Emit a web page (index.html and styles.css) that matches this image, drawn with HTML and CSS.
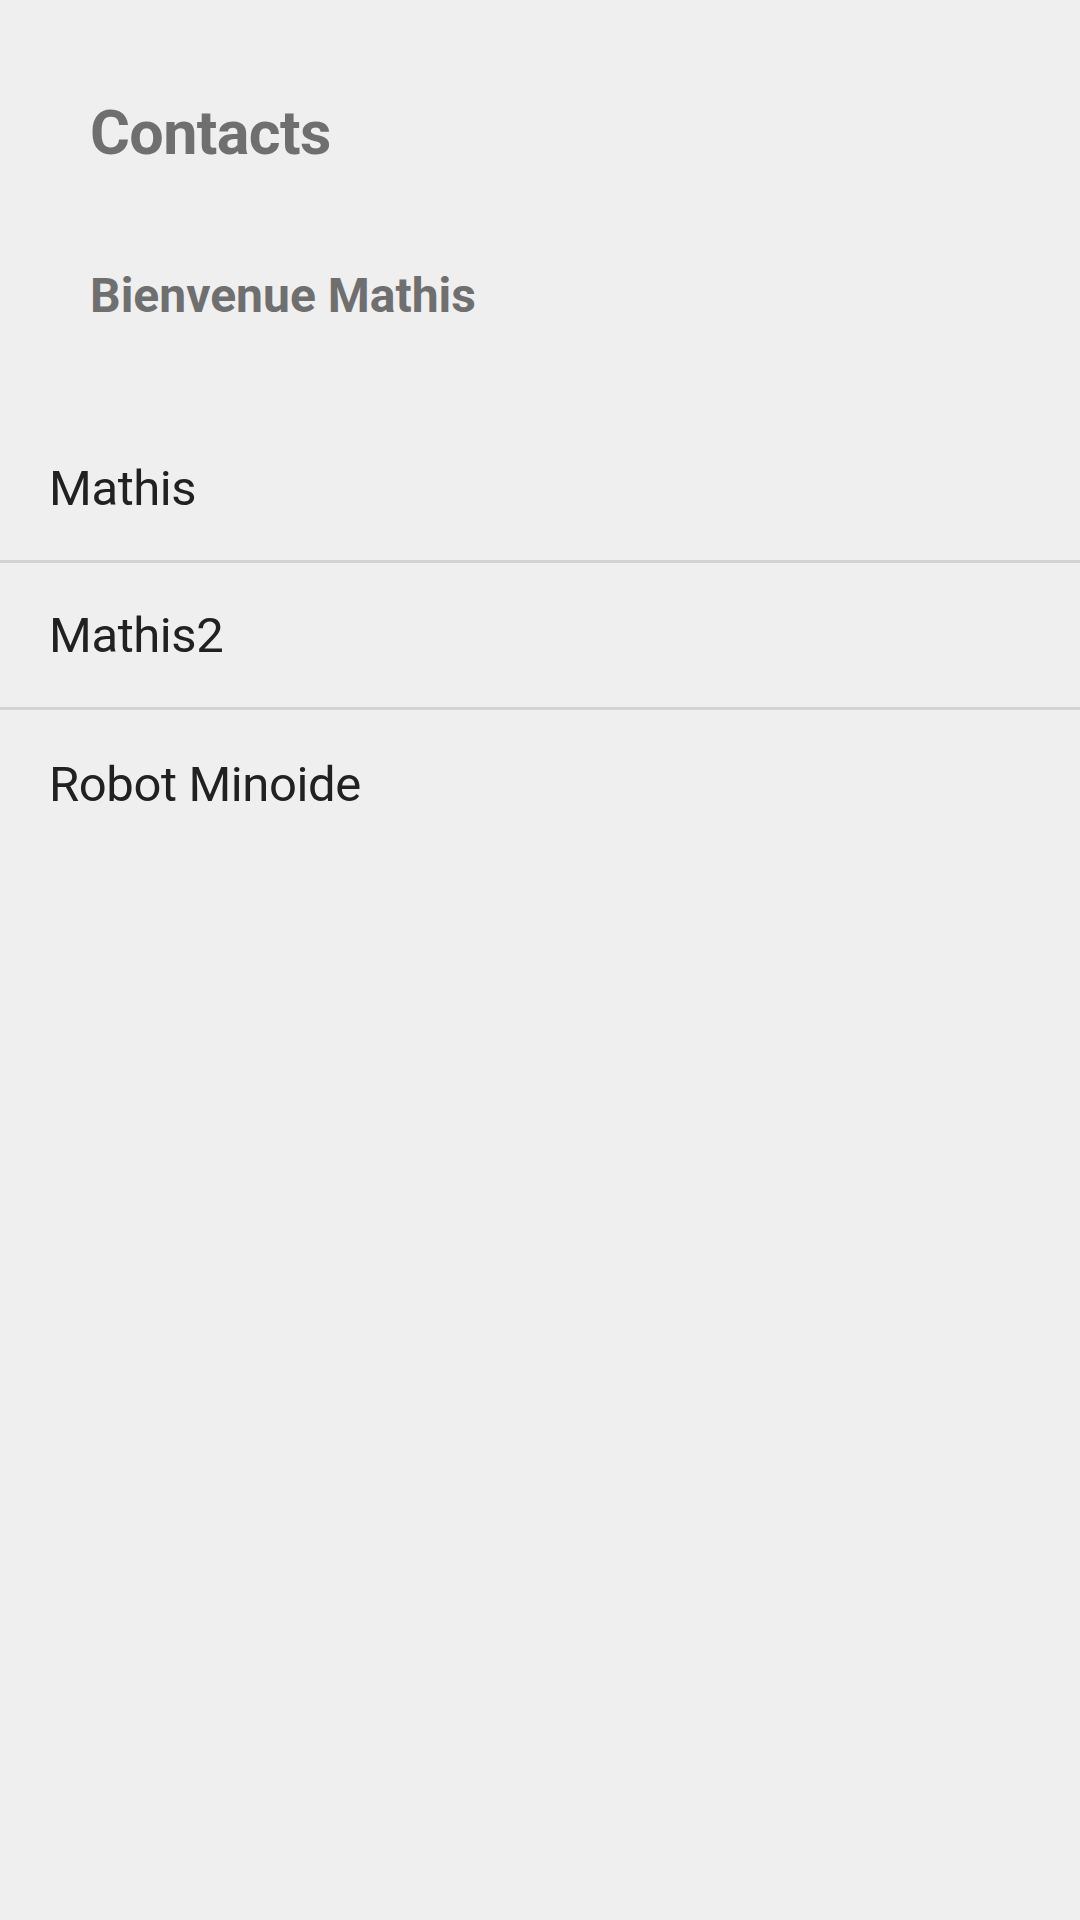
FILE: index.html
```html
<!DOCTYPE html>
<html lang="fr">
<head>
<meta charset="utf-8">
<title>Contacts</title>
<link rel="stylesheet" href="styles.css">
</head>
<body>
<div class="screen">
  <header class="header">
    <h1 class="title">Contacts</h1>
    <h2 class="subtitle">Bienvenue Mathis</h2>
  </header>
  <ul class="list">
    <li class="item">Mathis</li>
    <li class="item">Mathis2</li>
    <li class="item">Robot Minoide</li>
  </ul>
</div>
</body>
</html>
```

FILE: styles.css
```css
html, body {
  margin: 0;
  padding: 0;
  background: #efefef;
}
body {
  font-family: Roboto, "Noto Sans", sans-serif;
  width: 1080px;
  height: 1920px;
  overflow: hidden;
}
.screen {
  display: flex;
  flex-direction: column;
}
.header {
  padding: 97px 0 0 90px;
}
.title {
  margin: 0;
  font-size: 61px;
  line-height: 72px;
  font-weight: 700;
  letter-spacing: -0.6px;
  color: #6f6f6f;
}
.subtitle {
  margin: 99px 0 0 0;
  font-size: 48px;
  line-height: 56px;
  font-weight: 700;
  color: #6f6f6f;
}
.list {
  list-style: none;
  margin: 92px 0 0 0;
  padding: 0;
}
.item {
  height: 147px;
  box-sizing: border-box;
  display: flex;
  align-items: center;
  padding: 1px 0 0 49px;
  font-size: 49px;
  letter-spacing: -0.4px;
  color: #212121;
  border-bottom: 3px solid #d3d3d3;
}
.item:last-child {
  border-bottom: none;
}
```
